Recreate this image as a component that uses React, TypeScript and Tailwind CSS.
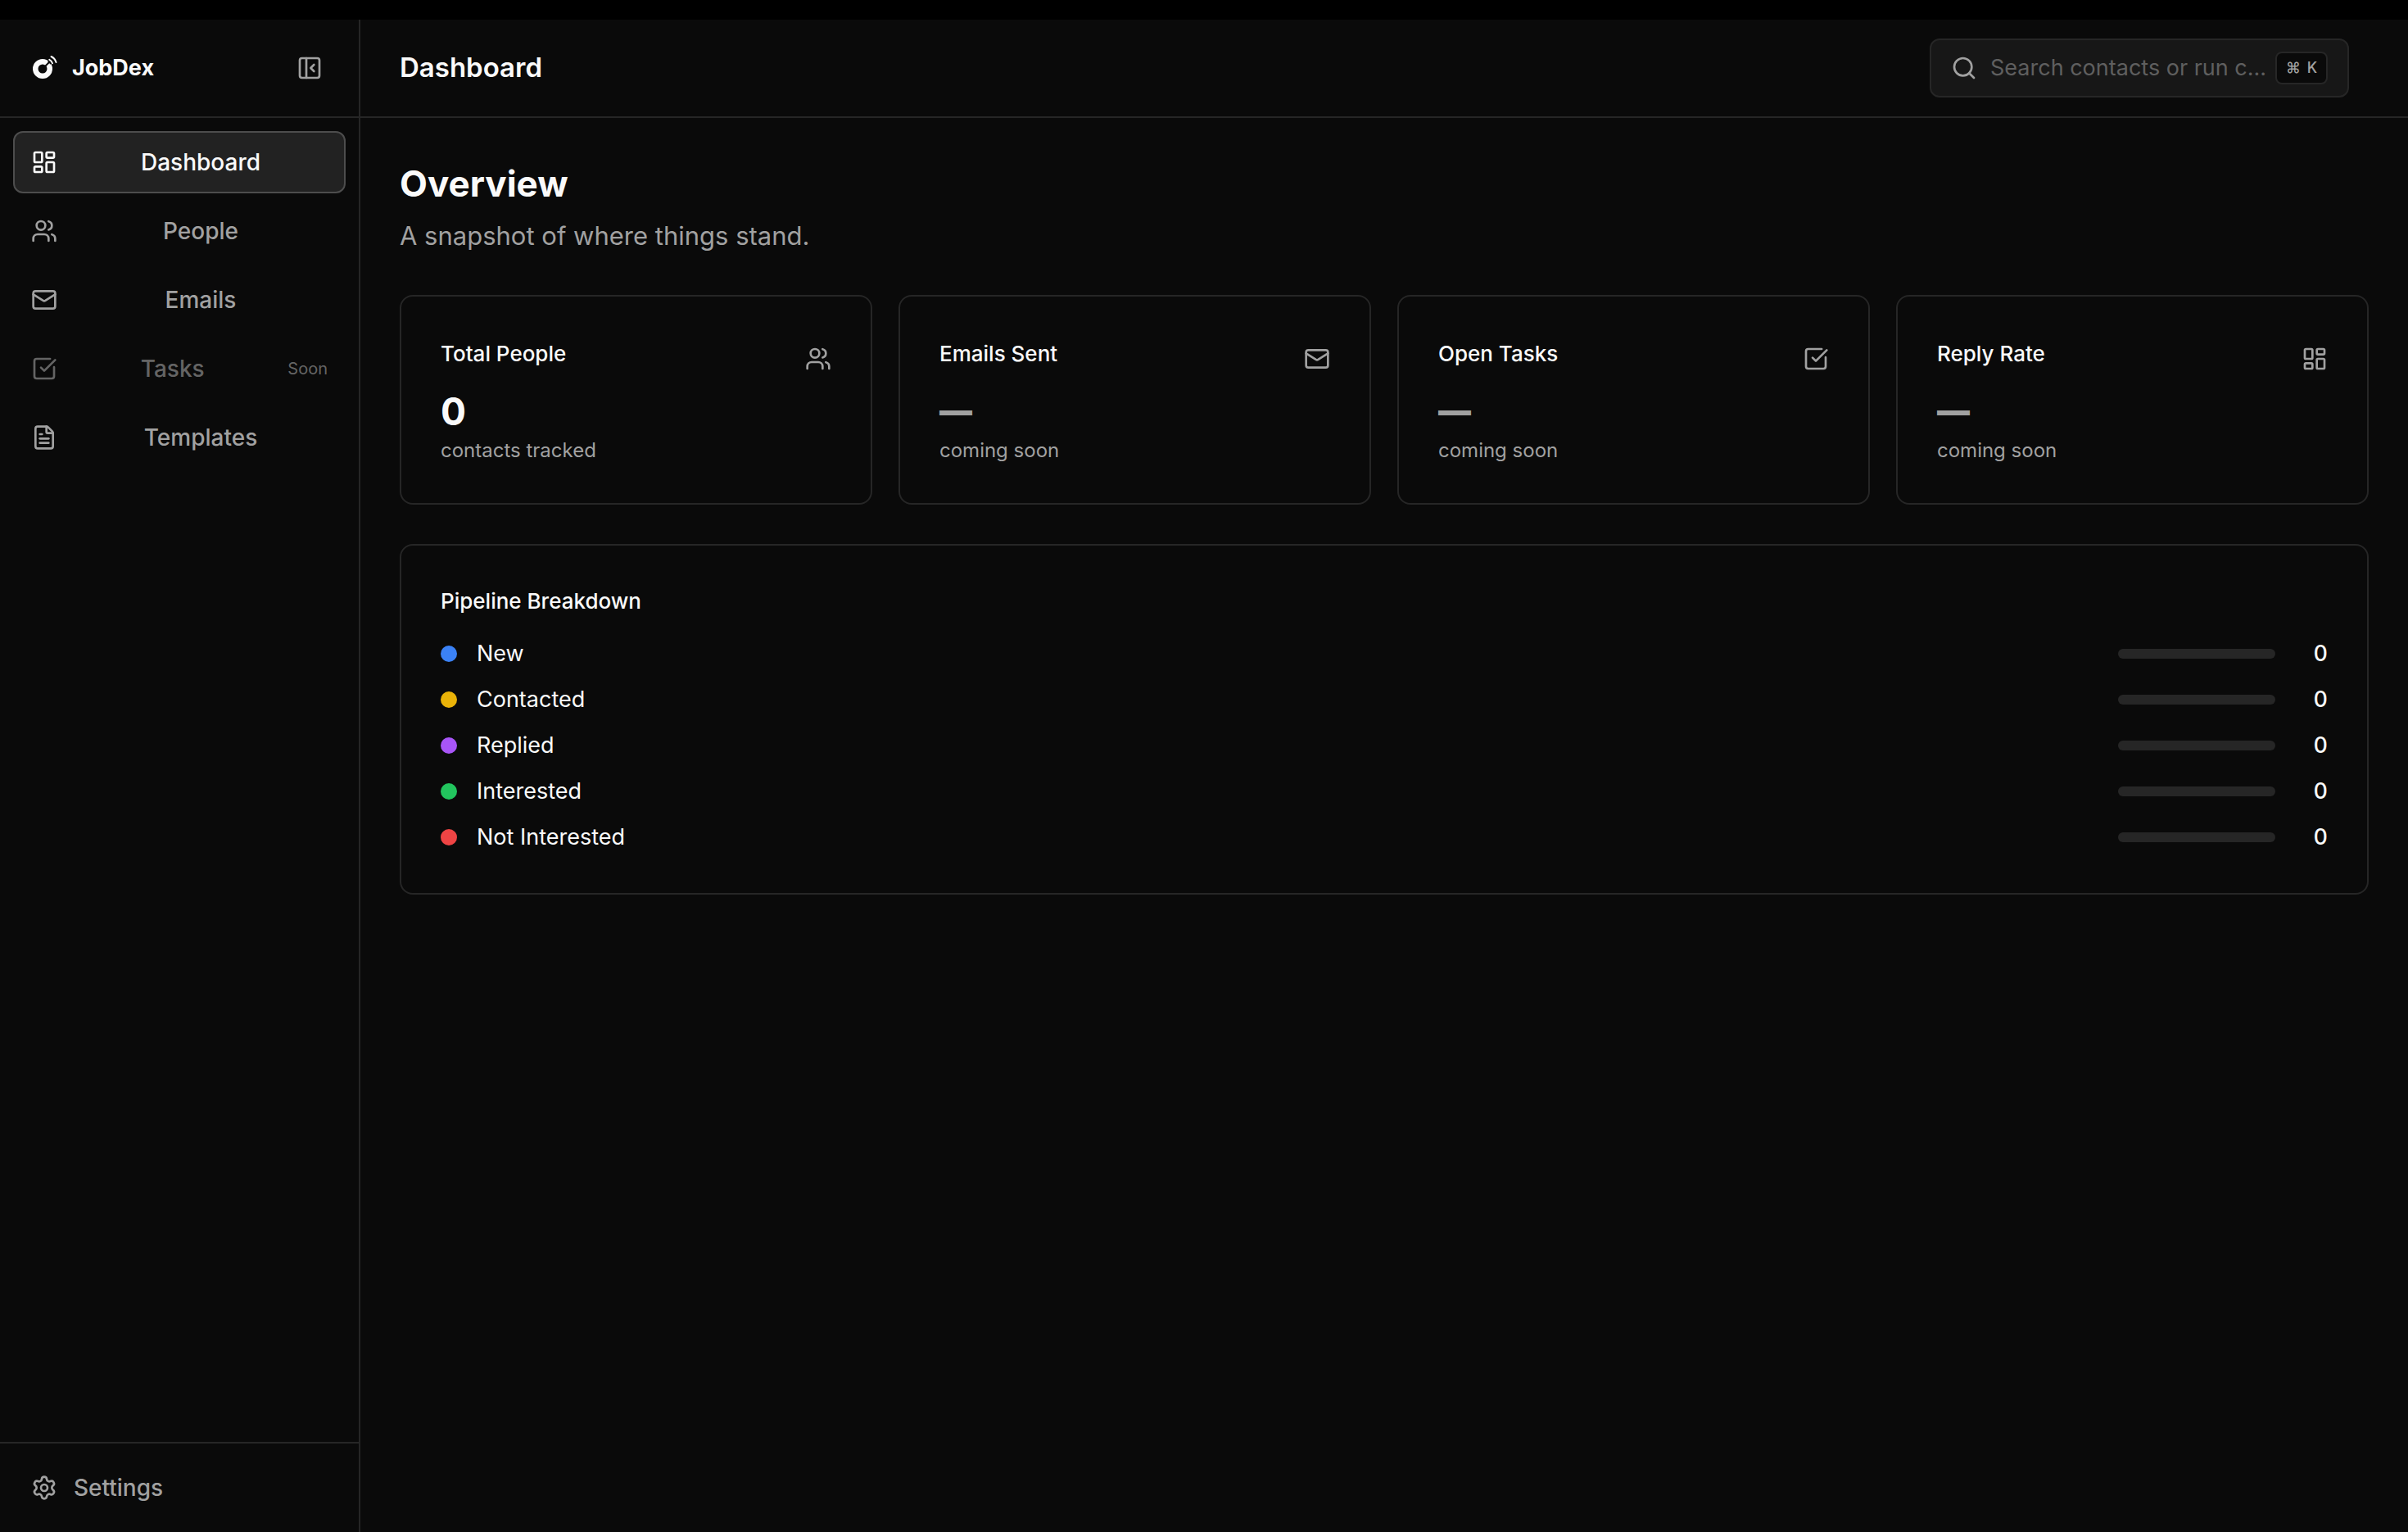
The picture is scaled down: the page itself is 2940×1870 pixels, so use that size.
import React, { useState } from "react";
import {
  FileText,
  LayoutDashboard,
  Mail,
  PanelLeftClose,
  Search,
  Settings,
  SquareCheckBig,
  Users,
} from "lucide-react";

/* =======================
   DATA
======================= */

const navItems = [
  { id: "dashboard", label: "Dashboard", icon: LayoutDashboard },
  { id: "people", label: "People", icon: Users },
  { id: "emails", label: "Emails", icon: Mail },
  { id: "tasks", label: "Tasks", icon: SquareCheckBig, soon: true },
  { id: "templates", label: "Templates", icon: FileText },
];

const stats = [
  { title: "Total People", value: 0, note: "contacts tracked", icon: Users },
  { title: "Emails Sent", value: null, note: "coming soon", icon: Mail },
  { title: "Open Tasks", value: null, note: "coming soon", icon: SquareCheckBig },
  { title: "Reply Rate", value: null, note: "coming soon", icon: LayoutDashboard },
];

const pipeline = [
  { label: "New", count: 0, color: "bg-[#3b82f6]" },
  { label: "Contacted", count: 0, color: "bg-[#eab308]" },
  { label: "Replied", count: 0, color: "bg-[#a855f7]" },
  { label: "Interested", count: 0, color: "bg-[#22c55e]" },
  { label: "Not Interested", count: 0, color: "bg-[#ef4444]" },
];

/* =======================
   COMPONENTS
======================= */

function Logo() {
  return (
    <svg viewBox="0 0 32 32" className="size-8 shrink-0" fill="none">
      <circle cx="14" cy="17" r="8.75" stroke="currentColor" strokeWidth="6.5" />
      {/* gap between the ring and the signal */}
      <path d="M17.5 13.5 23.5 7.5" stroke="#0a0a0a" strokeWidth="2" />
      <path d="M21 6.5a7.5 7.5 0 0 1 4 4.5" stroke="#0a0a0a" strokeWidth="4" />
      <path
        d="M22.3 5.8a7.5 7.5 0 0 1 3.7 4.4M24.5 2a11.5 11.5 0 0 1 6 7"
        stroke="currentColor"
        strokeWidth="2"
        strokeLinecap="round"
      />
    </svg>
  );
}

function Sidebar() {
  const [active, setActive] = useState("dashboard");

  return (
    <aside className="flex w-[440px] shrink-0 flex-col border-r-2 border-[#262626]">
      <div className="flex h-[120px] items-center border-b-2 border-[#262626] pr-8 pl-[38px]">
        <Logo />
        <span className="ml-[18px] flex-1 text-[27px] font-bold">JobDex</span>
        <button aria-label="Collapse sidebar" className="p-3 text-[#a1a1a1]">
          <PanelLeftClose className="size-8" />
        </button>
      </div>

      <nav className="flex flex-1 flex-col gap-2 p-4">
        {navItems.map(({ id, label, icon: Icon, soon }) => (
          <button
            key={id}
            disabled={soon}
            onClick={() => setActive(id)}
            className={`flex h-[76px] items-center gap-5 rounded-xl border-2 px-5 text-[28px] font-medium ${
              active === id
                ? "border-[#4d4d4d] bg-[#222222] text-[#fafafa]"
                : "border-transparent text-[#a1a1a1]"
            } ${soon ? "opacity-60" : ""}`}
          >
            <Icon className="size-8 shrink-0" />
            <span className="flex-1 text-center">{label}</span>
            {soon && <span className="text-xl font-normal">Soon</span>}
          </button>
        ))}
      </nav>

      <div className="border-t-2 border-[#262626] p-4">
        <button className="flex h-[76px] w-full items-center gap-5 border-2 border-transparent px-5 text-[28px] font-medium text-[#a1a1a1]">
          <Settings className="size-8 shrink-0" />
          Settings
        </button>
      </div>
    </aside>
  );
}

function Header() {
  return (
    <header className="flex h-[120px] shrink-0 items-center justify-between border-b-2 border-[#262626] pr-[72px] pl-12">
      <h1 className="text-[33px] font-semibold">Dashboard</h1>
      <label className="flex h-[72px] w-[512px] items-center rounded-xl border-2 border-[#262626] bg-[#171717] px-6">
        <Search className="size-8 shrink-0 text-[#a1a1a1]" />
        <input
          type="text"
          aria-label="Search"
          placeholder="Search contacts or run c..."
          className="ml-4 min-w-0 flex-1 bg-transparent text-[27px] outline-none placeholder:text-[#5f5f5f]"
        />
        <kbd className="flex h-10 w-16 items-center justify-center gap-2 rounded-lg border-2 border-[#262626] bg-[#0a0a0a] font-[Inter,sans-serif] text-lg font-medium text-[#a1a1a1]">
          <span>⌘</span>
          <span>K</span>
        </kbd>
      </label>
    </header>
  );
}

function StatCard({ title, value, note, icon: Icon }: (typeof stats)[number]) {
  return (
    <div className="rounded-2xl border-2 border-[#262626] p-12">
      <div className="flex items-start justify-between pb-4">
        <h3 className="text-[26px] leading-[44px] font-medium">{title}</h3>
        <Icon className="mt-3 size-8 text-[#a1a1a1]" />
      </div>
      {value === null ? (
        <p className="text-[40px] leading-[64px] font-black text-[#a1a1a1]">—</p>
      ) : (
        <p className="text-[46px] leading-[64px] font-bold">{value}</p>
      )}
      <p className="text-2xl leading-8 text-[#a1a1a1]">{note}</p>
    </div>
  );
}

function Pipeline() {
  const total = pipeline.reduce((sum, s) => sum + s.count, 0);

  return (
    <section className="mt-12 rounded-2xl border-2 border-[#262626] p-12">
      <h3 className="text-[26px] leading-10 font-medium">Pipeline Breakdown</h3>
      <ul className="mt-6 flex flex-col gap-4">
        {pipeline.map((stage) => (
          <li key={stage.label} className="flex items-center gap-6 text-[27px] leading-10">
            <span className={`size-5 rounded-full ${stage.color}`} />
            <span className="flex-1">{stage.label}</span>
            <div className="h-3 w-48 overflow-hidden rounded-full bg-[#262626]">
              <div
                className={`h-full ${stage.color}`}
                style={{ width: `${total ? (stage.count / total) * 100 : 0}%` }}
              />
            </div>
            <span className="w-10 text-right font-medium tabular-nums">{stage.count}</span>
          </li>
        ))}
      </ul>
    </section>
  );
}

/* =======================
   PAGE
======================= */

export default function App() {
  return (
    <div className="flex min-h-screen flex-col bg-[#0a0a0a] font-[Inter,sans-serif] text-[#fafafa]">
      <div className="h-6 bg-black" />
      <div className="flex flex-1">
        <Sidebar />
        <div className="flex min-w-0 flex-1 flex-col">
          <Header />
          <main className="p-12">
            <h2 className="text-[44px] leading-[64px] font-bold">Overview</h2>
            <p className="mt-2 text-[31px] leading-[48px] text-[#a1a1a1]">
              A snapshot of where things stand.
            </p>
            <div className="mt-12 grid grid-cols-4 gap-8">
              {stats.map((stat) => (
                <StatCard key={stat.title} {...stat} />
              ))}
            </div>
            <Pipeline />
          </main>
        </div>
      </div>
    </div>
  );
}
